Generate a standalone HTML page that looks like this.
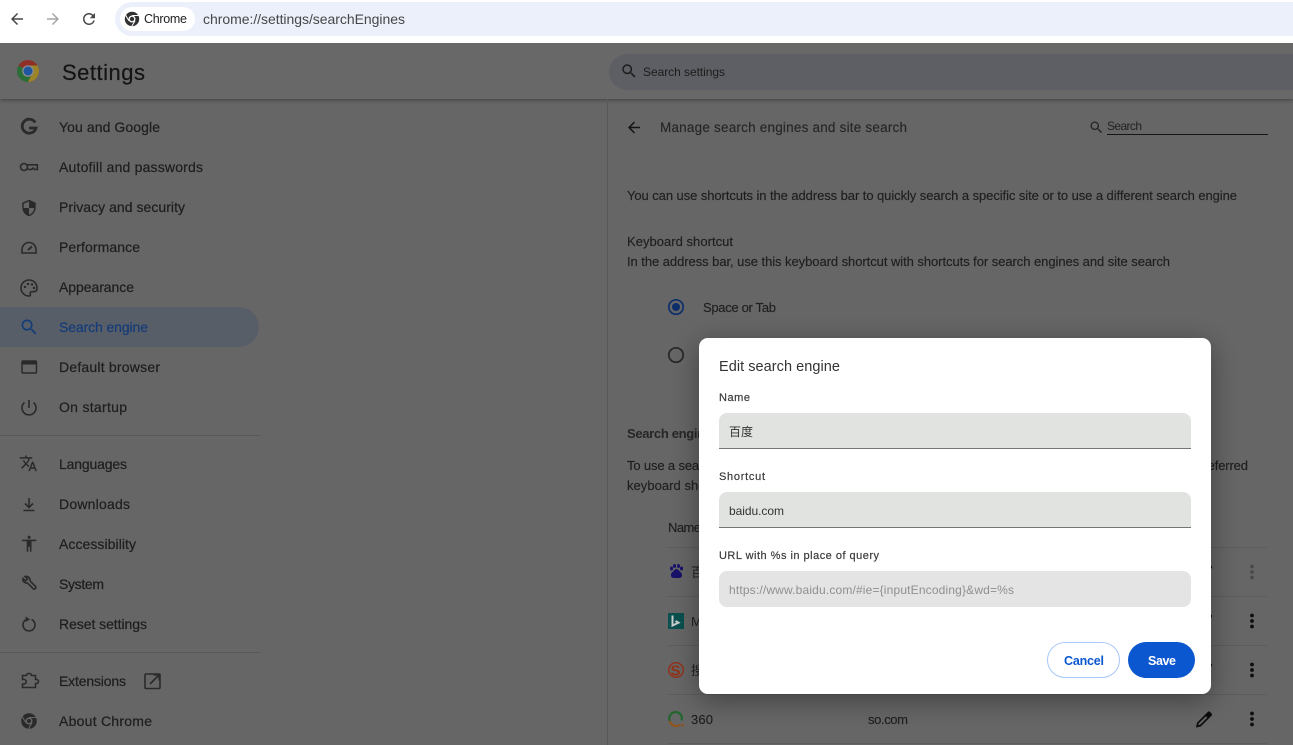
<!DOCTYPE html>
<html><head><meta charset="utf-8"><title>Settings</title>
<style>
html,body{margin:0;padding:0;background:#666;overflow:hidden}
svg{display:block}
text{font-family:"Liberation Sans","Noto Sans CJK SC",sans-serif}
.n{font-size:14px;fill:#1e1e1e;stroke:#1e1e1e;stroke-width:.22}
.b{font-size:13px;fill:#1f1f1f;stroke:#1f1f1f;stroke-width:.15}
.l{font-size:11px;fill:#3c3c3c;stroke:#3c3c3c;stroke-width:.2}
.i{fill:#2a2a2a}
.s{fill:none;stroke:#2a2a2a;stroke-width:1.6}
</style></head><body>
<svg width="1293" height="745" viewBox="0 0 1293 745" xmlns="http://www.w3.org/2000/svg">
<defs>
<filter id="sh" x="-20%" y="-20%" width="140%" height="140%"><feDropShadow dx="0" dy="6" stdDeviation="14" flood-color="#000" flood-opacity=".38"/></filter>
<filter id="hs" x="-5%" y="-50%" width="110%" height="200%"><feDropShadow dx="0" dy="1" stdDeviation="2" flood-color="#000" flood-opacity=".4"/></filter>
<path id="srch" d="M15.5 14h-.79l-.28-.27A6.471 6.471 0 0 0 16 9.5 6.5 6.5 0 1 0 9.5 16c1.61 0 3.09-.59 4.23-1.57l.27.28v.79l5 4.99L20.49 19l-4.99-5zm-6 0C7.01 14 5 11.99 5 9.5S7.01 5 9.5 5 14 7.01 14 9.5 11.99 14 9.5 14z"/>
<path id="back" d="M20 11H7.83l5.59-5.59L12 4l-8 8 8 8 1.41-1.41L7.83 13H20v-2z"/>
<path id="pen" d="M-8 8L-7 3.200 3.700-7.500a1.700 1.700 0 0 1 2.400 0l1.400 1.400a1.700 1.700 0 0 1 0 2.400L-3.200 7z M-5.300 3.900L-5.700 5.700-3.900 5.300 3.300-1.900 1.900-3.300z" fill="#0c0c0c" fill-rule="evenodd"/>
<g id="dots"><circle cx="0" cy="-5.500" r="1.900"/><circle cx="0" cy="0" r="1.900"/><circle cx="0" cy="5.500" r="1.900"/></g>
</defs>

<rect width="1293" height="745" fill="#666"/>

<!-- header -->
<rect x="0" y="43" width="1293" height="56" fill="#686868" filter="url(#hs)"/>
<circle cx="28" cy="71" r="11" fill="#8f2f28"/>
<path d="M28 71L18.500 65.500A11 11 0 0 0 28 82L33.500 71z" fill="#2a6e38"/>
<path d="M28 71L33.500 71 28 82A11 11 0 0 0 37.500 65.500L28 65.500z" fill="#9c8428"/>
<circle cx="28" cy="71" r="5.800" fill="#8c8c8c"/><circle cx="28" cy="71" r="4.500" fill="#1f569f"/>
<text x="62" y="80" font-size="22" fill="#141414" stroke="#141414" stroke-width=".2" textLength="83">Settings</text>
<rect x="609" y="54" width="720" height="36" rx="18" fill="#5d5f64"/>
<use href="#srch" transform="translate(620 62) scale(.76)" fill="#1c1c1c"/>
<text x="643" y="76" font-size="12" fill="#1c1c1c" textLength="82">Search settings</text>

<!-- sidebar items -->
<path d="M0 307H239a20 20 0 0 1 0 40H0z" fill="#585e68"/>
<text class="n" x="59" y="132" textLength="101">You and Google</text>
<text class="n" x="59" y="172" textLength="144">Autofill and passwords</text>
<text class="n" x="59" y="212" textLength="126">Privacy and security</text>
<text class="n" x="59" y="252" textLength="81">Performance</text>
<text class="n" x="59" y="292" textLength="75">Appearance</text>
<text class="n" x="59" y="332" textLength="89" style="fill:#143c78;stroke:#143c78">Search engine</text>
<text class="n" x="59" y="372" textLength="101">Default browser</text>
<text class="n" x="59" y="412" textLength="68">On startup</text>
<rect x="0" y="435" width="261" height="1" fill="#5a5a5a"/>
<text class="n" x="59" y="469" textLength="68">Languages</text>
<text class="n" x="59" y="509" textLength="71">Downloads</text>
<text class="n" x="59" y="549" textLength="77">Accessibility</text>
<text class="n" x="59" y="589" textLength="45">System</text>
<text class="n" x="59" y="629" textLength="88">Reset settings</text>
<rect x="0" y="652" width="261" height="1" fill="#5a5a5a"/>
<text class="n" x="59" y="686" textLength="67">Extensions</text>
<text class="n" x="59" y="726" textLength="93">About Chrome</text>

<!-- sidebar icons -->
<path d="M35.200 122.500A7 7 0 1 0 36 128H29" fill="none" stroke="#2a2a2a" stroke-width="2.800"/>
<g class="s"><circle cx="24" cy="167" r="3.500"/><path d="M27.500 164.800H37.300V169.500H34.500L33.200 168 31.500 169.500H29.500L27.500 169"/></g>
<g transform="translate(20 199) scale(.75)"><path class="i" d="M12 1L3 5v6c0 5.550 3.840 10.740 9 12 5.160-1.260 9-6.450 9-12V5l-9-4zm0 10.990h7c-.53 4.120-3.280 7.790-7 8.940V12H5V6.300l7-3.110v8.800z"/></g>
<g class="s"><path d="M22 253v-3.500a7 7 0 0 1 14 0v3.500z"/><path d="M28 250l4-3.500" stroke-width="2"/></g>
<g class="s"><path d="M29 280a8 8 0 0 0 0 16c1.500 0 1.800-1 1.300-2-.6-1.200.2-2.300 1.500-2.300H34c2 0 3-1.500 3-3.700 0-4.500-3.500-8-8-8z"/></g>
<circle cx="25" cy="287" r="1.200" class="i"/><circle cx="28" cy="284" r="1.200" class="i"/><circle cx="32" cy="284.500" r="1.200" class="i"/><circle cx="34" cy="288" r="1.200" class="i"/>
<use href="#srch" transform="translate(19 317) scale(.85)" fill="#143c78"/>
<rect x="22" y="361" width="14.500" height="12" rx="1.200" fill="none" stroke="#2a2a2a" stroke-width="1.500"/><rect x="22" y="361" width="14.500" height="3.500" fill="#2a2a2a"/>
<path d="M29 400v8M24.500 402.500a7 7 0 1 0 9 0" class="s"/>
<g transform="translate(19 454) scale(.78)"><path class="i" d="M12.870 15.070l-2.540-2.510.03-.03A17.520 17.520 0 0 0 14.070 6H17V4h-7V2H8v2H1v1.990h11.170C11.500 7.920 10.440 9.750 9 11.350 8.070 10.320 7.300 9.190 6.690 8h-2c.73 1.630 1.730 3.170 2.980 4.560l-5.090 5.020L4 19l5-5 3.110 3.110.76-2.040zM18.500 10h-2L12 22h2l1.120-3h4.750L21 22h2l-4.500-12zm-2.620 7l1.620-4.330L19.120 17h-3.240z"/></g>
<path d="M29 498v9M25 503.500l4 4 4-4M23.500 510.500h11" class="s"/>
<g transform="translate(19.500 534) scale(.8)"><path class="i" d="M12 2c1.100 0 2 .9 2 2s-.9 2-2 2-2-.9-2-2 .9-2 2-2zm9 7h-6v13h-2v-6h-2v6H9V9H3V7h18v2z"/></g>
<path d="M23 578.500l2.500 2.500 2-2-2.500-2.500c2.500-.8 5 1 5 3.500l.1 1 5.400 5.400a1.300 1.300 0 0 1-2.400 2.100L27.500 583c-2.500.5-5.300-1.500-4.500-4.500z" class="s"/>
<path d="M26.500 619.500a6 6 0 1 0 5 0" class="s"/><path d="M25.500 616.500l4.500 2.800-4 2.600z" class="i"/>
<path d="M22.500 675.500H26.500a2 2 0 0 1 2-2h1a2 2 0 0 1 2 2h4v4h1a2 2 0 0 1 0 4h-1v4h-13v-3.500h1.500a2.200 2.200 0 0 0 0-4.500h-1.500z" class="s" stroke-width="1.300"/>
<g class="s"><rect x="145" y="674" width="15" height="14.500" rx="1"/><path d="M150 684l9-9M153.500 674.800h5.700v5.700" fill="none"/></g>
<circle cx="29" cy="721" r="7.800" fill="#2a2a2a"/><circle cx="29" cy="721" r="3.500" fill="#666"/><circle cx="29" cy="721" r="2" fill="#2a2a2a"/><path d="M29 717.500h7.500M25.900 722.800l-3.800-6.400M32 722.800l-3.800 6.400" stroke="#666" stroke-width="1"/>

<!-- main content -->
<rect x="607" y="99" width="1" height="646" fill="#585858"/>
<use href="#back" transform="translate(625 118.500) scale(.75)" fill="#141414"/>
<text x="660" y="132" font-size="13.500" fill="#262626" stroke="#262626" stroke-width=".15" textLength="247">Manage search engines and site search</text>
<use href="#srch" transform="translate(1088.500 119.500) scale(.66)" fill="#222"/>
<text x="1107" y="130" font-size="12" fill="#222" textLength="35">Search</text>
<rect x="1107" y="134" width="161" height="1" fill="#161616"/>
<text class="b" x="627" y="200" textLength="610">You can use shortcuts in the address bar to quickly search a specific site or to use a different search engine</text>
<text class="b" x="627" y="246" textLength="106">Keyboard shortcut</text>
<text class="b" x="627" y="266" textLength="543">In the address bar, use this keyboard shortcut with shortcuts for search engines and site search</text>
<circle cx="676" cy="307" r="7.200" fill="none" stroke="#0c2f6c" stroke-width="1.700"/><circle cx="676" cy="307" r="4" fill="#0c2f6c"/>
<text class="b" x="703" y="312" textLength="73">Space or Tab</text>
<circle cx="676" cy="355" r="7.200" fill="none" stroke="#262626" stroke-width="1.700"/>
<text x="627" y="438" font-size="13" font-weight="bold" fill="#262626" textLength="92">Search engines</text>
<text class="b" x="627" y="470" textLength="621">To use a search engine in the address bar, enter the shortcut for that search engine, followed by your preferred</text>
<text class="b" x="627" y="490" textLength="104">keyboard shortcut</text>
<text class="b" x="668" y="532" textLength="33">Name</text>
<g fill="#5c5c5c"><rect x="668" y="547" width="599" height="1"/><rect x="668" y="596" width="599" height="1"/><rect x="668" y="645" width="599" height="1"/><rect x="668" y="694" width="599" height="1"/><rect x="668" y="743" width="599" height="1"/></g>

<!-- engine icons -->
<g fill="#17126a"><ellipse cx="671.500" cy="568.500" rx="1.500" ry="2"/><ellipse cx="674.500" cy="566" rx="1.500" ry="2"/><ellipse cx="678.500" cy="566" rx="1.500" ry="2"/><ellipse cx="681.500" cy="568.500" rx="1.500" ry="2"/><path d="M676.500 569c-2 0-2.500 2-4 3-1.500 1.200-1.800 3-1.500 4 .4 1.500 2 2 3 2h5c1 0 2.600-.5 3-2 .3-1-.1-2.800-1.500-4-1.500-1-2-3-4-3z"/></g>
<rect x="668" y="613" width="16" height="16" fill="#09504e"/><path d="M672.500 615.500v10l6-2.800-3-1.700" fill="none" stroke="#c8cccc" stroke-width="2"/>
<circle cx="676" cy="670" r="7.300" fill="none" stroke="#933016" stroke-width="1.400"/><text x="670.500" y="675.500" font-size="15" font-weight="bold" fill="#933016" textLength="11">S</text>
<path d="M669.800 721a6.300 6.300 0 1 1 11.700-.5" fill="none" stroke="#23652f" stroke-width="2.200"/><path d="M669.800 721a6.300 6.300 0 0 0 10 3.700" fill="none" stroke="#8f5418" stroke-width="2.200"/><circle cx="682.500" cy="725" r="1.400" fill="#8f5418"/>
<text x="691" y="577" font-size="13" fill="#1f1f1f">百度</text>
<text x="691" y="626" font-size="13" fill="#1f1f1f">Microsoft Bing</text>
<text x="691" y="675" font-size="13" fill="#1f1f1f">搜狗</text>
<text class="b" x="691" y="724" textLength="22">360</text>
<text class="b" x="868" y="724" textLength="40">so.com</text>
<use href="#pen" x="1204" y="572"/><use href="#pen" x="1204" y="621"/><use href="#pen" x="1204" y="670"/><use href="#pen" x="1204" y="719.500"/>
<use href="#dots" x="1252" y="572" fill="#4a4a4a"/><use href="#dots" x="1252" y="621" fill="#0e0e0e"/><use href="#dots" x="1252" y="670" fill="#0e0e0e"/><use href="#dots" x="1252" y="719" fill="#0e0e0e"/>

<!-- toolbar -->
<rect x="0" y="0" width="1293" height="43" fill="#fff"/>
<use href="#back" transform="translate(8 10) scale(.75)" fill="#474747"/>
<use href="#back" transform="translate(62 28) scale(-.75 -.75)" fill="#a5a5a5"/>
<g transform="translate(80 10) scale(.75)"><path fill="#474747" d="M17.650 6.350A7.958 7.958 0 0 0 12 4c-4.420 0-7.990 3.580-7.990 8s3.570 8 7.990 8c3.730 0 6.840-2.550 7.730-6h-2.080A5.990 5.990 0 0 1 12 18c-3.310 0-6-2.690-6-6s2.690-6 6-6c1.660 0 3.140.69 4.220 1.780L13 11h7V4l-2.350 2.350z"/></g>
<path d="M132 2H1293V36H132a17 17 0 0 1 0-34z" fill="#ebf0fa"/>
<rect x="120" y="7" width="75" height="24" rx="12" fill="#fff"/>
<circle cx="132" cy="19" r="7.200" fill="#303030"/><circle cx="132" cy="19" r="3.500" fill="#fff"/><circle cx="132" cy="19" r="2.200" fill="#303030"/><path d="M132 15.500h7M128.900 20.800l-3.500-6M135 20.800l-3.500 6" stroke="#fff" stroke-width="1"/>
<text x="144" y="23" font-size="12.500" fill="#222" textLength="43">Chrome</text>
<text x="203" y="24" font-size="14" fill="#474747" textLength="202">chrome://settings/searchEngines</text>

<!-- dialog -->
<rect x="699" y="338" width="512" height="356" rx="9" fill="#fff" filter="url(#sh)"/>
<text x="719" y="371" font-size="14.500" fill="#333" textLength="121">Edit search engine</text>
<text class="l" x="719" y="401" textLength="31">Name</text>
<path d="M719 449V421a8 8 0 0 1 8-8h456a8 8 0 0 1 8 8v28z" fill="#e1e3e1"/><rect x="719" y="448" width="472" height="1" fill="#747775"/>
<text x="729" y="436" font-size="12" fill="#333">百度</text>
<text class="l" x="719" y="480" textLength="46">Shortcut</text>
<path d="M719 528V500a8 8 0 0 1 8-8h456a8 8 0 0 1 8 8v28z" fill="#e1e3e1"/><rect x="719" y="527" width="472" height="1" fill="#747775"/>
<text x="729" y="515" font-size="12" fill="#333" textLength="55">baidu.com</text>
<text class="l" x="719" y="559" textLength="160">URL with %s in place of query</text>
<rect x="719" y="571" width="472" height="36" rx="8" fill="#e3e4e3"/>
<text x="729" y="594" font-size="12" fill="#8f8f8f" textLength="285">https://www.baidu.com/#ie={inputEncoding}&amp;wd=%s</text>
<rect x="1047.500" y="642.500" width="72" height="35" rx="17.500" fill="#fff" stroke="#a8c7fa"/>
<text x="1064" y="665" font-size="12.500" font-weight="bold" fill="#0b57d0" textLength="40">Cancel</text>
<rect x="1128" y="642" width="67" height="36" rx="18" fill="#0b57d0"/>
<text x="1148" y="665" font-size="12.500" font-weight="bold" fill="#fff" textLength="28">Save</text>
</svg>
</body></html>
